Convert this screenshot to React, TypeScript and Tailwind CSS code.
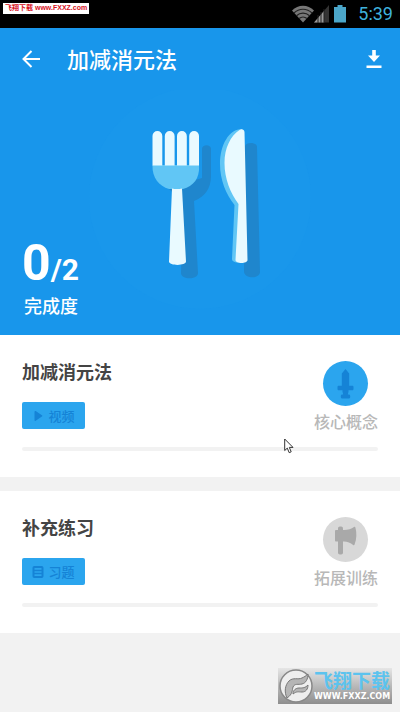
import type { ReactNode } from 'react';

type Lesson = {
  id: string;
  title: string;
  action: string;
  actionIcon: ReactNode;
  badge: string;
  badgeIcon: ReactNode;
  badgeColor: string;
};

const PlayIcon = () => (
  <svg viewBox="0 0 12 12" className="size-3" fill="#1583d6" aria-hidden="true">
    <path d="M2.5 1.8c0-.8.6-1.1 1.2-.7l6.2 4.1c.6.4.6 1 0 1.4l-6.2 4.2c-.6.4-1.2.1-1.2-.7z" />
  </svg>
);

const ListIcon = () => (
  <svg viewBox="0 0 12 12" className="size-3" fill="none" stroke="#1583d6" aria-hidden="true">
    <rect x="1.5" y="1" width="9" height="10" rx="0.8" strokeWidth="2" />
    <path d="M2 4.400h8M2 7.600h8" strokeWidth="1.500" />
  </svg>
);

const SwordIcon = () => (
  <svg viewBox="0 0 45 45" className="size-[45px]" fill="#1583d6" aria-hidden="true">
    <path d="M22.500 8l3.700 4.500v12.300h3c.8 0 1.300.5 1.300 1.200v2c0 .8-.5 1.300-1.300 1.300h-3.700v1.500l-.7 2.700h.9c.9 0 1.500.6 1.500 1.500v1.100c0 .9-.6 1.500-1.500 1.500h-6.400c-.9 0-1.500-.6-1.500-1.500V35c0-.9.6-1.500 1.500-1.500h.9l-.7-2.700v-1.500h-3.700c-.8 0-1.300-.5-1.300-1.300v-2c0-.7.5-1.200 1.300-1.200h3V12.500z" />
  </svg>
);

const AxeIcon = () => (
  <svg viewBox="0 0 45 45" className="size-[45px]" fill="#a9a9a9" aria-hidden="true">
    <rect x="15" y="9.500" width="5" height="28" rx="1.800" />
    <path d="M13.200 13H21c4 0 7.500-.9 10-3 .6-.4 1.200-.2 1.400.5 1.500 5.500 1.300 11.500-.8 17-.3.700-.9.800-1.500.4-2.600-2-5.600-3.400-9.100-3.400h-7.800c-.8 0-1.200-.4-1.200-1.200v-9.100c0-.8.4-1.200 1.200-1.200z" />
  </svg>
);

const lessons: Lesson[] = [
  {
    id: 'core',
    title: '加减消元法',
    action: '视频',
    actionIcon: <PlayIcon />,
    badge: '核心概念',
    badgeIcon: <SwordIcon />,
    badgeColor: 'bg-[#2ba5ee]',
  },
  {
    id: 'extra',
    title: '补充练习',
    action: '习题',
    actionIcon: <ListIcon />,
    badge: '拓展训练',
    badgeIcon: <AxeIcon />,
    badgeColor: 'bg-[#d8d8d8]',
  },
];

const StatusBar = () => (
  <div className="flex h-7 items-center justify-between bg-black pr-[7px] pl-[3px]">
    <span className="mb-[14px] flex h-[11px] items-center self-end bg-white px-0.5 font-['Liberation_Sans','Noto_Sans_CJK_SC',sans-serif] text-[7px] font-bold whitespace-nowrap text-[#d8101c]">
      飞翔下载 www.FXXZ.com
    </span>
    <div className="flex items-center">
      <svg viewBox="0 0 22 18" className="h-[18px] w-[22px]" fill="none" aria-hidden="true">
        <path d="M0 5.500C6-1 16-1 22 5.500L11 17.500z" fill="#777" />
        <path
          d="M2 8c5-5 13-5 18 0M4.500 10.800c3.700-3.500 9.300-3.500 13 0M7 13.500c2.300-2 5.700-2 8 0"
          stroke="#222"
          strokeWidth="1.200"
        />
      </svg>
      <svg viewBox="0 0 16 18" className="h-[18px] w-4" aria-hidden="true">
        <path d="M0 17.500L15 0v17.500z" fill="#333" />
        <path d="M0 17.500L10 6v11.500z" fill="#999" />
        <path d="M4 10v8M7 7v11M10 4v14" stroke="#222" />
      </svg>
      <svg viewBox="0 0 12 18" className="ml-1 h-[18px] w-3" fill="#4ba6c9" aria-hidden="true">
        <path d="M3.500 0h5v2H12v15.500H0V2h3.500z" />
      </svg>
      <time className="ml-3 font-[Roboto,sans-serif] text-lg leading-7 text-[#3fb2dd]">5:39</time>
    </div>
  </div>
);

const Cutlery = () => (
  <svg viewBox="88 90 224 220" className="h-[220px] w-[224px]" aria-hidden="true">
    <circle cx="200" cy="198" r="111" fill="#1997eb" />
    <g fill="#1f86cd">
      <path d="M202 149c0-5 9-5 9 0v27c0 12-6 21-17 25l4 72c0 7-17 7-17 0l2-71-15-14 34-10z" />
      <path d="M245 146c1-4 12-4 12 1l3 125c0 7-15 7-16 0z" />
    </g>
    <path d="M152.500 165h46.500c1 14-6 21-16 24h-14c-10-3-17-11-16.500-24z" fill="#61c6f5" />
    <g fill="#e9faff">
      <path d="M152.500 165.500V136a4.900 4.900 0 0 1 9.800 0v29.500z" />
      <path d="M164.800 165.500V136a4.900 4.900 0 0 1 9.800 0v29.500z" />
      <path d="M177 165.500V136a4.900 4.900 0 0 1 9.800 0v29.500z" />
      <path d="M189.200 165.500V136a4.900 4.900 0 0 1 9.800 0v29.500z" />
      <path d="M172 188.500q5 1 10 0l4 73c.2 4.500-17 4.500-17 0z" />
    </g>
    <path d="M242 129c-13 0-22 16-22 35 0 16 6 30 14.500 41l-2.500 54c0 3 5 4 9 3.500z" fill="#61c6f5" />
    <path
      d="M244.500 132c-.3-3-3-3.500-5-2-9 6-15 18-15 33 0 16 6 30 14 41l-3 56c0 4 12 4 12 0z"
      fill="#e9faff"
    />
  </svg>
);

const Hero = () => (
  <section className="bg-[#1896eb] text-white">
    <header className="flex h-[62px] items-center px-[22px]">
      <button type="button" aria-label="返回" className="flex">
        <svg viewBox="0 0 18 18" className="size-[18px]" fill="none" stroke="#fff" strokeWidth="2" aria-hidden="true">
          <path d="M9.500 1L1.500 9l8 8M2 9h16" />
        </svg>
      </button>
      <h1 className="mb-0.5 ml-[27px] text-[22px] leading-8 font-medium">加减消元法</h1>
      <button type="button" aria-label="下载" className="-mr-1 ml-auto flex">
        <svg viewBox="0 0 16 20" className="h-5 w-4" fill="#fff" aria-hidden="true">
          <path d="M6.200 1h3.600v5.500H14l-6 6.500-6-6.500h4.200zM.5 16.500h15V19H.5z" />
        </svg>
      </button>
    </header>
    <div className="grid">
      <div className="col-start-1 row-start-1 flex justify-center">
        <Cutlery />
      </div>
      <div className="col-start-1 row-start-1 self-end px-[22px] pb-[18px]">
        <p className="font-[Roboto,sans-serif] leading-9 font-bold">
          <span className="text-[50px]">0</span>
          <span className="text-[30px]">/2</span>
        </p>
        <p className="ml-0.5 text-lg leading-6 font-medium">完成度</p>
      </div>
      <div className="col-start-1 row-start-1 h-[245px]" />
    </div>
  </section>
);

const LessonCard = ({ lesson }: { lesson: Lesson }) => (
  <li className="bg-white px-[22px] pt-[26px] pb-[26px]">
    <div className="flex items-start justify-between">
      <div>
        <h2 className="text-lg leading-5 font-bold text-[#444]">{lesson.title}</h2>
        <button
          type="button"
          className="mt-[21px] flex h-[27px] w-[63px] items-center justify-center gap-1 rounded-xs bg-[#2ba5ee] text-[13px] font-medium text-[#1583d6]"
        >
          {lesson.actionIcon}
          {lesson.action}
        </button>
      </div>
      <div className="flex flex-col items-center">
        <div className={`rounded-full ${lesson.badgeColor}`}>{lesson.badgeIcon}</div>
        <p className="mt-[5px] text-base leading-5 font-medium text-[#b8b8b8]">{lesson.badge}</p>
      </div>
    </div>
    <div
      role="progressbar"
      aria-label={lesson.title}
      aria-valuenow={0}
      aria-valuemin={0}
      aria-valuemax={100}
      className="mt-4 h-1 rounded-full bg-[#f2f2f2]"
    />
  </li>
);

const Watermark = () => (
  <div className="flex h-9 w-[114px] items-center bg-linear-to-b from-[#e6e6e6] to-[#8e8e8e]">
    <svg viewBox="0 0 36 36" className="size-9 shrink-0" aria-hidden="true">
      <circle cx="18" cy="18" r="16" fill="#eee" stroke="#888" strokeWidth="1.500" />
      <path
        d="M9 30c-3-6-2-13 2-17 4-4 9-1 13-3 2-1 4-2 6-4 0 5-2 9-6 10-4 1-7-1-9 3-1 3 0 7-6 11z"
        fill="#b5b5b5"
        stroke="#777"
      />
      <path d="M15 26c0-4 3-6 6-6 4 0 6 0 9-3 0 4-2 7-6 7-4 0-5-1-9 2z" fill="#b5b5b5" stroke="#777" />
    </svg>
    <div className="whitespace-nowrap">
      <p className="text-[19px] leading-[22px] font-bold text-[#5cc3ee]">飞翔下载</p>
      <p className="font-['DejaVu_Sans',sans-serif] text-[8px] leading-3 font-bold text-white">WWW.FXXZ.COM</p>
    </div>
  </div>
);

const App = () => (
  <div className="relative flex min-h-screen flex-col bg-[#f2f2f2] font-['Noto_Sans_CJK_SC',sans-serif]">
    <StatusBar />
    <Hero />
    <ul className="flex flex-col gap-[14px]">
      {lessons.map((lesson) => (
        <LessonCard key={lesson.id} lesson={lesson} />
      ))}
    </ul>
    <footer className="mt-auto flex justify-end pr-2 pb-2">
      <Watermark />
    </footer>
    {/* mouse pointer over the first card */}
    <svg viewBox="0 0 10 16" className="absolute top-[438px] left-[284px] h-4 w-2.5" fill="#fff" stroke="#333" aria-hidden="true">
      <path d="M.7 1v11.500l2.600-2.400 1.900 4.600 2-.9-1.900-4.400h3.700z" />
    </svg>
  </div>
);

export default App;
